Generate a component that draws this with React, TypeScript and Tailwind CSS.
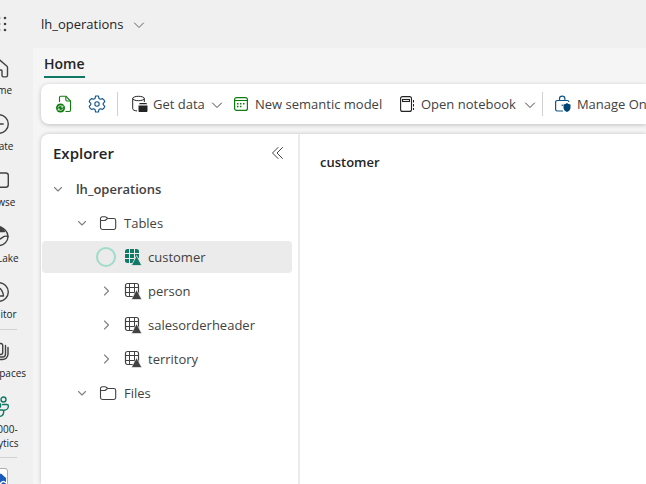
import type { ReactNode } from "react";

type IconProps = { className?: string };

function ChevronDown({ className = "" }: IconProps) {
  return (
    <svg className={className} width="12" height="12" viewBox="0 0 12 12" fill="none" stroke="currentColor" strokeLinecap="round" strokeLinejoin="round" aria-hidden="true">
      <path d="M1.500 4 6 8.500 10.500 4" />
    </svg>
  );
}

function TreeChevron({ open }: { open: boolean }) {
  return (
    <svg className="shrink-0 text-[#808080]" width="12" height="12" viewBox="0 0 12 12" fill="none" stroke="currentColor" strokeWidth="1.100" strokeLinecap="round" strokeLinejoin="round" aria-hidden="true">
      {open ? <path d="M2.500 4.500 6 8l3.500-3.500" /> : <path d="M4.500 2 8.500 6l-4 4" />}
    </svg>
  );
}

function FolderIcon() {
  return (
    <svg className="shrink-0" width="18" height="16" viewBox="0 0 18 16" fill="none" stroke="#424242" strokeWidth="1.100" strokeLinejoin="round" aria-hidden="true">
      <path d="M1.500 4.200V3.500a1.700 1.700 0 0 1 1.700-1.700h2.900c.5 0 .9.200 1.200.5l1.600 1.200h5.900a1.900 1.900 0 0 1 1.900 1.900v7.200a1.900 1.900 0 0 1-1.900 1.900H3.400a1.900 1.900 0 0 1-1.900-1.900Z" />
      <path d="M1.500 5.500h4c.5 0 .9-.2 1.200-.5l1.600-1.300" />
    </svg>
  );
}

function TableIcon({ active }: { active: boolean }) {
  return active ? (
    <svg className="shrink-0" width="18" height="18" viewBox="0 0 18 18" aria-hidden="true">
      <rect x="1" y="1" width="14" height="14" rx="2.500" fill="#117865" />
      <path d="M5.500 1v14M10.500 1v14M1 5.500h14M1 10.500h14" stroke="#ebebeb" />
      <path d="M12.600 7.500 17.800 17.500H7.400Z" fill="#117865" stroke="#ebebeb" strokeWidth=".8" />
    </svg>
  ) : (
    <svg className="shrink-0" width="18" height="18" viewBox="0 0 18 18" fill="none" aria-hidden="true">
      <rect x="1.500" y="1.500" width="13" height="13" rx="2" stroke="#424242" strokeWidth="1.200" />
      <path d="M5.500 1.500v13M10.500 1.500v13M1.500 5.500h13M1.500 10.500h13" stroke="#424242" />
      <path d="M12.600 7.700 17.800 17.500H7.400Z" fill="#424242" stroke="#fff" strokeWidth=".6" />
    </svg>
  );
}

function RefreshFileIcon() {
  return (
    <svg width="16" height="18" viewBox="0 0 16 18" fill="none" stroke="#107c10" strokeWidth="1.100" aria-hidden="true">
      <path d="M3.500 7V2.500a1.200 1.200 0 0 1 1.200-1.200H10L14.500 6v9.300a1.200 1.200 0 0 1-1.200 1.200H9.500" />
      <path d="M9.800 1.500v3.300c0 .7.500 1.200 1.200 1.200h3.300" />
      <circle cx="4.500" cy="13" r="4.500" fill="#107c10" stroke="none" />
      <path d="M2 12.600c.3-1.300 1.300-1.900 2.500-1.900 1 0 1.700.4 2.200 1.200M6.900 10.500v1.600H5.200M7 13.500c-.3 1.200-1.300 1.800-2.500 1.800-1 0-1.700-.4-2.200-1.100M2.100 15.500V14h1.700" stroke="#fff" strokeWidth=".8" />
    </svg>
  );
}

function GearIcon() {
  return (
    <svg width="18" height="18" viewBox="0 0 18 18" fill="none" stroke="#0f548c" strokeWidth="1.100" strokeLinejoin="round" aria-hidden="true">
      <path d="M7.600 1h2.800l.6 2.500 1.300.7 2.300-.6 1.100 1 1.100 2-1.600 1.700v1.400l1.600 1.700-1.100 2-1.100 1-2.300-.6-1.300.7-.6 2.500H7.600L7 14.500l-1.300-.7-2.300.6-1.100-1-1.100-2 1.600-1.700V8.300L1.200 6.600l1.100-2 1.100-1 2.300.6L7 3.500Z" />
      <circle cx="9" cy="9" r="2.200" />
    </svg>
  );
}

function DatabaseIcon() {
  return (
    <svg width="16" height="18" viewBox="0 0 16 18" fill="none" stroke="#242424" aria-hidden="true">
      <ellipse cx="6.500" cy="3.500" rx="5.800" ry="2.200" />
      <path d="M.7 3.500v10.300c0 1.100 1.800 1.900 4.300 2.100M12.300 3.500V7" />
      <path d="M8.500 8h5.200c.8 0 1.300.5 1.300 1.200H7.200c0-.7.500-1.200 1.300-1.200ZM6.500 10.500h9v5.300c0 .8-.5 1.200-1.200 1.200H7.700c-.7 0-1.200-.4-1.200-1.200Z" fill="#242424" stroke="none" />
    </svg>
  );
}

function SemanticModelIcon() {
  return (
    <svg width="14" height="16" viewBox="0 0 14 16" fill="none" stroke="#107c10" aria-hidden="true">
      <rect x=".6" y="1.600" width="12.800" height="12.800" rx="2" strokeWidth="1.200" />
      <path d="M.5 4.500h13" />
      <path d="M6 7.800h1.500M9 7.800h1.500M3 10.600h1.500M6 10.600h1.500M3 7.800h1.500" strokeWidth="1.500" />
    </svg>
  );
}

function NotebookIcon() {
  return (
    <svg width="14" height="16" viewBox="0 0 14 16" fill="none" stroke="#242424" strokeWidth="1.100" aria-hidden="true">
      <rect x=".6" y=".6" width="10.900" height="14.800" rx="2" />
      <rect x="2.500" y="3.500" width="7" height="2" />
      <path d="M13.500 4v2.500M13.500 8v2.500M13.500 12v2" />
    </svg>
  );
}

function LockShieldIcon() {
  return (
    <svg width="16" height="18" viewBox="0 0 16 18" fill="none" stroke="#0f548c" strokeWidth="1.200" aria-hidden="true">
      <path d="M4.500 5.500V3.800a2.700 2.700 0 0 1 5.400 0v1.700M8 16H2.300A1.700 1.700 0 0 1 .6 14.300V7.200a1.700 1.700 0 0 1 1.700-1.700h9.900A1.700 1.700 0 0 1 13.900 7" />
      <circle cx="7.200" cy="10.200" r=".8" fill="#0f548c" stroke="none" />
      <path d="M12 8c1 .9 2.200 1.300 3.500 1.400v3.100c0 2-1.300 3.600-3.500 4.500-2.200-.9-3.500-2.500-3.500-4.500V9.400C9.800 9.300 11 8.900 12 8Z" fill="#004578" stroke="none" />
    </svg>
  );
}

function RailSvg({ children, color = "#424242" }: { children: ReactNode; color?: string }) {
  return (
    <svg className="overflow-visible" width="20" height="20" viewBox="0 0 20 20" fill="none" stroke={color} strokeWidth="1.400" strokeLinejoin="round" strokeLinecap="round" aria-hidden="true">
      {children}
    </svg>
  );
}

function RailItem({ label, icon }: { label: string; icon: ReactNode }) {
  return (
    <button type="button" className="flex flex-col items-center gap-[5px] pt-[10px] pb-[7px] text-[10px] leading-[14px] whitespace-pre-line">
      {icon}
      <span>{label}</span>
    </button>
  );
}

function Rail() {
  return (
    <nav aria-label="Workloads" className="w-[33px] shrink-0 overflow-hidden">
      <div className="-ml-[38px] flex w-[72px] flex-col items-center">
        <button type="button" aria-label="App launcher" className="flex h-12 items-center">
          <svg width="18" height="16" viewBox="0 0 18 16" fill="#424242" aria-hidden="true">
            {[2, 8, 14].map((y) =>
              [4, 10, 16].map((x) => <circle key={`${x}-${y}`} cx={x} cy={y} r="1.300" />)
            )}
          </svg>
        </button>
        <RailItem label="Home" icon={<RailSvg><path d="M1 8.500 9.200 1.200a1.200 1.200 0 0 1 1.600 0L19 8.300c.3.300.5.700.5 1.200v8c0 .8-.6 1.400-1.400 1.400h-2.700c-.8 0-1.400-.6-1.400-1.400v-4.700c0-.4-.4-.8-.8-.8H7.800c-.4 0-.8.4-.8.800v4.700c0 .8-.6 1.400-1.400 1.400H2.400C1.600 18.900 1 18.300 1 17.500Z" /></RailSvg>} />
        <RailItem label="Create" icon={<RailSvg><circle cx="11" cy="10" r="9.300" /><path d="M6.500 10h8.700M11 5.500v9" /></RailSvg>} />
        <RailItem label="Browse" icon={<RailSvg><rect x="2" y="3" width="18.300" height="14.300" rx="2.500" /></RailSvg>} />
        <RailItem label="OneLake" icon={<RailSvg><circle cx="11" cy="10.500" r="9" /><path d="M8 5.500h8.500L13 1h-3Z" fill="#424242" /><path d="M2.500 13c3-5 6 1.500 9.500 0s3.500-4 8-2.500" /></RailSvg>} />
        <RailItem label="Monitor" icon={<RailSvg><circle cx="11" cy="10" r="9.300" /><path d="M11.500 6.500c1.200-.8 4 4.500 4 7.500H8" /></RailSvg>} />
        <hr className="my-px w-[38px] border-[#d1d1d1]" />
        <RailItem label="Workspaces" icon={<RailSvg><rect x="4" y="2.500" width="10.700" height="11" rx="2" /><path d="M17.500 4.500v8.500a3 3 0 0 1-3 3H7M20 6.500V13a5.500 5.500 0 0 1-5.500 5.500H10" /></RailSvg>} />
        <RailItem label={"DP3000-\nAnalytics"} icon={<RailSvg color="#117865"><circle cx="15.500" cy="2.500" r="2.500" /><circle cx="5" cy="2.500" r="2.500" /><circle cx="10.500" cy="8.500" r="2.200" /><path d="M14.500 7.500h4.300c1 0 1.600.6 1.600 1.500 0 2.500-2 4.300-4.500 4.300M6 13h8.200c.9 0 1.500.6 1.500 1.500 0 3-2 5-5 5s-5-2-5-5Z" /></RailSvg>} />
        <hr className="w-[38px] border-[#d1d1d1]" />
        <button type="button" aria-label="Open item" className="mt-[10px] h-6 w-5 rounded-[3px] border border-[#adadad] bg-white">
          <svg width="18" height="22" viewBox="0 0 18 22" aria-hidden="true">
            <path d="M3 8 12 4.500l5 4.500v11H3Z" fill="#185abd" />
            <path d="M3 14q2-3 4.500 0t4.500 0 5 0" fill="none" stroke="#fff" strokeWidth="1.500" />
          </svg>
        </button>
      </div>
    </nav>
  );
}

function Toolbar() {
  return (
    <div role="toolbar" aria-label="Home" className="flex h-10 shrink-0 items-center overflow-hidden rounded-l-lg bg-white pl-[15px] whitespace-nowrap text-[#424242] shadow-[0_1px_4px_rgba(0,0,0,0.22)]">
      <button type="button" aria-label="Refresh"><RefreshFileIcon /></button>
      <button type="button" aria-label="Settings" className="ml-4"><GearIcon /></button>
      <span className="mr-[14px] ml-[11px] h-6 w-px shrink-0 bg-[#d1d1d1]" />
      <button type="button" className="flex w-[102px] shrink-0 items-center gap-[5px]">
        <DatabaseIcon />
        <span>Get data</span>
        <ChevronDown className="mt-[2px] ml-px" />
      </button>
      <button type="button" className="flex w-[166px] shrink-0 items-center gap-[7px]">
        <SemanticModelIcon />
        <span>New semantic model</span>
      </button>
      <button type="button" className="flex shrink-0 items-center gap-[7px]">
        <NotebookIcon />
        <span>Open notebook</span>
        <ChevronDown className="mt-[2px] ml-px" />
      </button>
      <span className="mr-[12px] ml-[6px] h-6 w-px shrink-0 bg-[#d1d1d1]" />
      <button type="button" className="flex shrink-0 items-center gap-[6px]">
        <LockShieldIcon />
        <span>Manage OneLake data access</span>
      </button>
    </div>
  );
}

function TableRow({ name, active = false }: { name: string; active?: boolean }) {
  return (
    <button
      type="button"
      role="treeitem"
      aria-selected={active}
      className={`flex h-8 items-center rounded pl-[54px] ${active ? "bg-[#ebebeb]" : ""}`}
    >
      <span className="flex w-5 justify-center">
        {active ? <span className="h-5 w-5 rounded-full border-2 border-[#9fdcc9]" /> : <TreeChevron open={false} />}
      </span>
      <span className="mr-[6px] ml-2"><TableIcon active={active} /></span>
      <span>{name}</span>
    </button>
  );
}

function FolderRow({ name }: { name: string }) {
  return (
    <button type="button" role="treeitem" aria-expanded="true" className="flex h-8 items-center pl-[34px]">
      <TreeChevron open />
      <span className="mr-[7px] ml-[11px]"><FolderIcon /></span>
      <span>{name}</span>
    </button>
  );
}

function Explorer() {
  return (
    <aside className="w-[259px] shrink-0 border-r-2 border-[#ebebeb]">
      <div className="flex h-[39px] items-start justify-between pt-[9px] pr-[14px] pl-3">
        <h2 className="text-[15px] leading-5 font-semibold text-[#242424]">Explorer</h2>
        <button type="button" aria-label="Collapse explorer" className="flex h-5 items-center text-[#424242]">
          <svg width="14" height="14" viewBox="0 0 14 14" fill="none" stroke="currentColor" strokeLinecap="round" strokeLinejoin="round" aria-hidden="true">
            <path d="M8 1.500 2.500 7 8 12.500M12.500 1.500 7 7l5.500 5.500" />
          </svg>
        </button>
      </div>
      <div role="tree" aria-label="Lakehouse" className="flex flex-col gap-[2px] pr-[6px] pl-px text-[#424242]">
        <button type="button" role="treeitem" aria-expanded="true" className="flex h-8 items-center gap-[12px] pl-[10px] font-semibold">
          <TreeChevron open />
          <span>lh_operations</span>
        </button>
        <FolderRow name="Tables" />
        <TableRow name="customer" active />
        <TableRow name="person" />
        <TableRow name="salesorderheader" />
        <TableRow name="territory" />
        <FolderRow name="Files" />
      </div>
    </aside>
  );
}

export default function App() {
  return (
    <div className="flex h-screen overflow-hidden bg-[#f0f0f0] font-['Open_Sans','Noto_Sans',sans-serif] text-[13px] leading-5 text-[#242424]">
      <Rail />
      <div className="flex min-w-0 flex-1 flex-col">
        <header className="flex h-12 shrink-0 items-center pl-2">
          <button type="button" className="flex items-center gap-[10px]">
            <span>lh_operations</span>
            <ChevronDown className="mt-[2px] text-[#616161]" />
          </button>
        </header>
        <main className="flex min-h-0 flex-1 flex-col bg-[#f5f5f5] pl-2">
          <div className="flex h-9 shrink-0 items-start pt-[6px] pl-[3px]">
            <button type="button" className="border-b-2 border-[#117865] pb-[2px] text-sm leading-5 font-semibold">Home</button>
          </div>
          <Toolbar />
          <div className="mt-[10px] flex min-h-0 flex-1 rounded-tl-lg bg-white shadow-[0_0_4px_rgba(0,0,0,0.2)]">
            <Explorer />
            <section className="min-w-0 flex-1 pt-[18px] pl-5">
              <h1 className="font-semibold">customer</h1>
            </section>
          </div>
        </main>
      </div>
    </div>
  );
}
